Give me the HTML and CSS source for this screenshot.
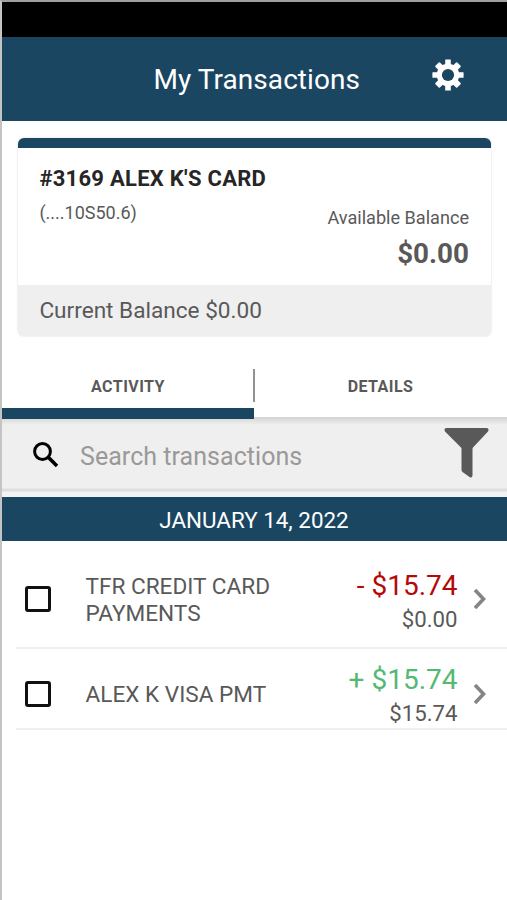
FILE: index.html
```html
<!DOCTYPE html>
<html lang="en">
<head>
<meta charset="utf-8">
<title>My Transactions</title>
<link rel="stylesheet" href="styles.css">
</head>
<body>
<div class="app">
  <div class="status-bar"></div>
  <header class="header">
    <span></span>
    <h1 class="title">My Transactions</h1>
    <svg class="gear" viewBox="-16 -16 32 32">
      <g fill="#fff">
        <rect x="-2.8" y="-15.6" width="5.6" height="31.2" rx=".5"/>
        <rect x="-3.2" y="-15.4" width="6.4" height="30.8" rx=".8" transform="rotate(45)"/>
        <rect x="-2.8" y="-15.6" width="5.6" height="31.2" rx=".5" transform="rotate(90)"/>
        <rect x="-3.2" y="-15.4" width="6.4" height="30.8" rx=".8" transform="rotate(135)"/>
        <circle r="11.2"/>
      </g>
      <circle r="6.1" fill="#1a4661"/>
    </svg>
  </header>
  <section class="card">
    <div class="card-body">
      <h2 class="card-name">#3169 ALEX K'S CARD</h2>
      <div class="card-number">(....10S50.6)</div>
      <div class="available">Available Balance</div>
      <div class="available-amount">$0.00</div>
    </div>
    <div class="card-footer">Current Balance $0.00</div>
  </section>
  <nav class="tabs">
    <div class="tab active">ACTIVITY</div>
    <div class="tab">DETAILS</div>
    <i class="tab-divider"></i>
  </nav>
  <div class="search">
    <svg class="search-icon" viewBox="0 0 26 26" fill="none" stroke="#000">
      <circle cx="9.5" cy="9.5" r="7.9" stroke-width="3"/>
      <path d="M15.3 15.3 24 24" stroke-width="3.6"/>
    </svg>
    <span class="placeholder">Search transactions</span>
    <svg class="filter" viewBox="0 0 45 51">
      <path d="M2 1H43Q45.5 2 44 4.500L29 20.500Q28.500 21 28.500 22V48.500Q28 51.500 25.500 50L18.500 45Q17.500 44 17.500 43V22Q17.500 21 17 20.500L1 4.500Q-.5 2 2 1Z" fill="#595959"/>
    </svg>
  </div>
  <div class="date">JANUARY 14, 2022</div>
  <main class="list">
    <div class="row first">
      <i class="checkbox"></i>
      <div class="desc">TFR CREDIT CARD<br>PAYMENTS</div>
      <div class="amounts">
        <div class="amount debit">- $15.74</div>
        <div class="balance">$0.00</div>
      </div>
      <svg class="chevron" viewBox="0 0 14 22"><path d="M2 2 10.500 11 2 20" fill="none" stroke="#858585" stroke-width="3.600"/></svg>
    </div>
    <div class="row second">
      <i class="checkbox"></i>
      <div class="desc">ALEX K VISA PMT</div>
      <div class="amounts">
        <div class="amount credit">+ $15.74</div>
        <div class="balance">$15.74</div>
      </div>
      <svg class="chevron" viewBox="0 0 14 22"><path d="M2 2 10.500 11 2 20" fill="none" stroke="#858585" stroke-width="3.600"/></svg>
    </div>
  </main>
</div>
</body>
</html>
```
FILE: styles.css
```css
* { box-sizing: border-box; }
body { margin: 0; background: #fff; font-family: Roboto, sans-serif; color: #595959; }
h1, h2 { margin: 0; }
svg { display: block; flex: none; }
.app {
  height: 900px;
  border-top: 2px solid #a0a0a0;
  border-left: 2px solid #c4c4c4;
  overflow: hidden;
  white-space: nowrap;
}
.status-bar { height: 35px; background: #000; }
.header {
  height: 84px;
  background: #1a4661;
  display: grid;
  grid-template-columns: 151.5px 278px 32px;
}
.title { color: #fff; font-size: 28px; font-weight: 400; line-height: 85px; letter-spacing: .06px; }
.gear { width: 32px; height: 32px; margin-top: 22px; }
.card {
  width: 473px;
  height: 198px;
  margin: 17px 0 0 16px;
  border-top: 10px solid #1a4661;
  border-radius: 6px;
  overflow: hidden;
  box-shadow: 0 0 2px #ccc;
}
.card-body { height: 137px; padding: 16px 22px 0 21.4px; }
.card-name { font-size: 22px; line-height: 30px; font-weight: 700; color: #262626; letter-spacing: .27px; }
.card-number { margin-top: 6px; font-size: 18px; line-height: 26px; }
.available { margin-top: -22px; font-size: 18.1px; line-height: 28px; text-align: right; }
.available-amount { margin-top: 4px; font-size: 27.8px; font-weight: 700; line-height: 36px; text-align: right; }
.card-footer { height: 51px; padding-left: 21.4px; background: #efefef; font-size: 22.6px; line-height: 52px; }
.tabs { position: relative; display: flex; height: 81px; }
.tab { width: 253px; font-size: 16px; font-weight: 700; line-height: 102px; text-align: center; letter-spacing: .45px; }
.active { width: 252px; height: 83px; border-bottom: 11px solid #1a4661; position: relative; }
.tab-divider { position: absolute; left: 251px; top: 33px; width: 2px; height: 33px; background: #929292; }
.search {
  height: 80px;
  padding: 0 18px 0 31px;
  background: linear-gradient(#d2d2d2, #dedede 3px, #efefef 8px, #efefef 71px, #dedede 72px, #dedede 74px, #f3f3f3 75px);
  display: flex;
}
.search-icon { width: 26px; height: 26px; margin-top: 25px; }
.placeholder { margin-left: 21px; font-size: 25px; line-height: 80px; color: #999; letter-spacing: .05px; }
.filter { width: 45px; height: 51px; margin: 10px 0 0 auto; }
.date { height: 44px; padding-right: 1px; background: #1a4661; color: #fff; font-size: 22.4px; line-height: 46px; text-align: center; }
.list { margin-left: 14px; }
.row { display: flex; align-items: center; border-bottom: 2px solid #efefef; padding: 0 20px 0 9px; }
.first { height: 108px; padding-top: 10px; }
.second { height: 81px; padding-top: 10px; }
.checkbox { flex: none; width: 26px; height: 26px; border: 3px solid #111; border-radius: 3px; }
.desc { margin: 2px 0 0 34.5px; font-size: 22.6px; line-height: 27px; }
.amounts { margin: 4px 0 0 auto; text-align: right; }
.amount { font-size: 28px; line-height: 36px; }
.debit { color: #b50909; }
.credit { color: #53b974; }
.balance { font-size: 22.2px; line-height: 31px; }
.chevron { width: 14px; height: 22px; margin-left: 15.5px; }
```
